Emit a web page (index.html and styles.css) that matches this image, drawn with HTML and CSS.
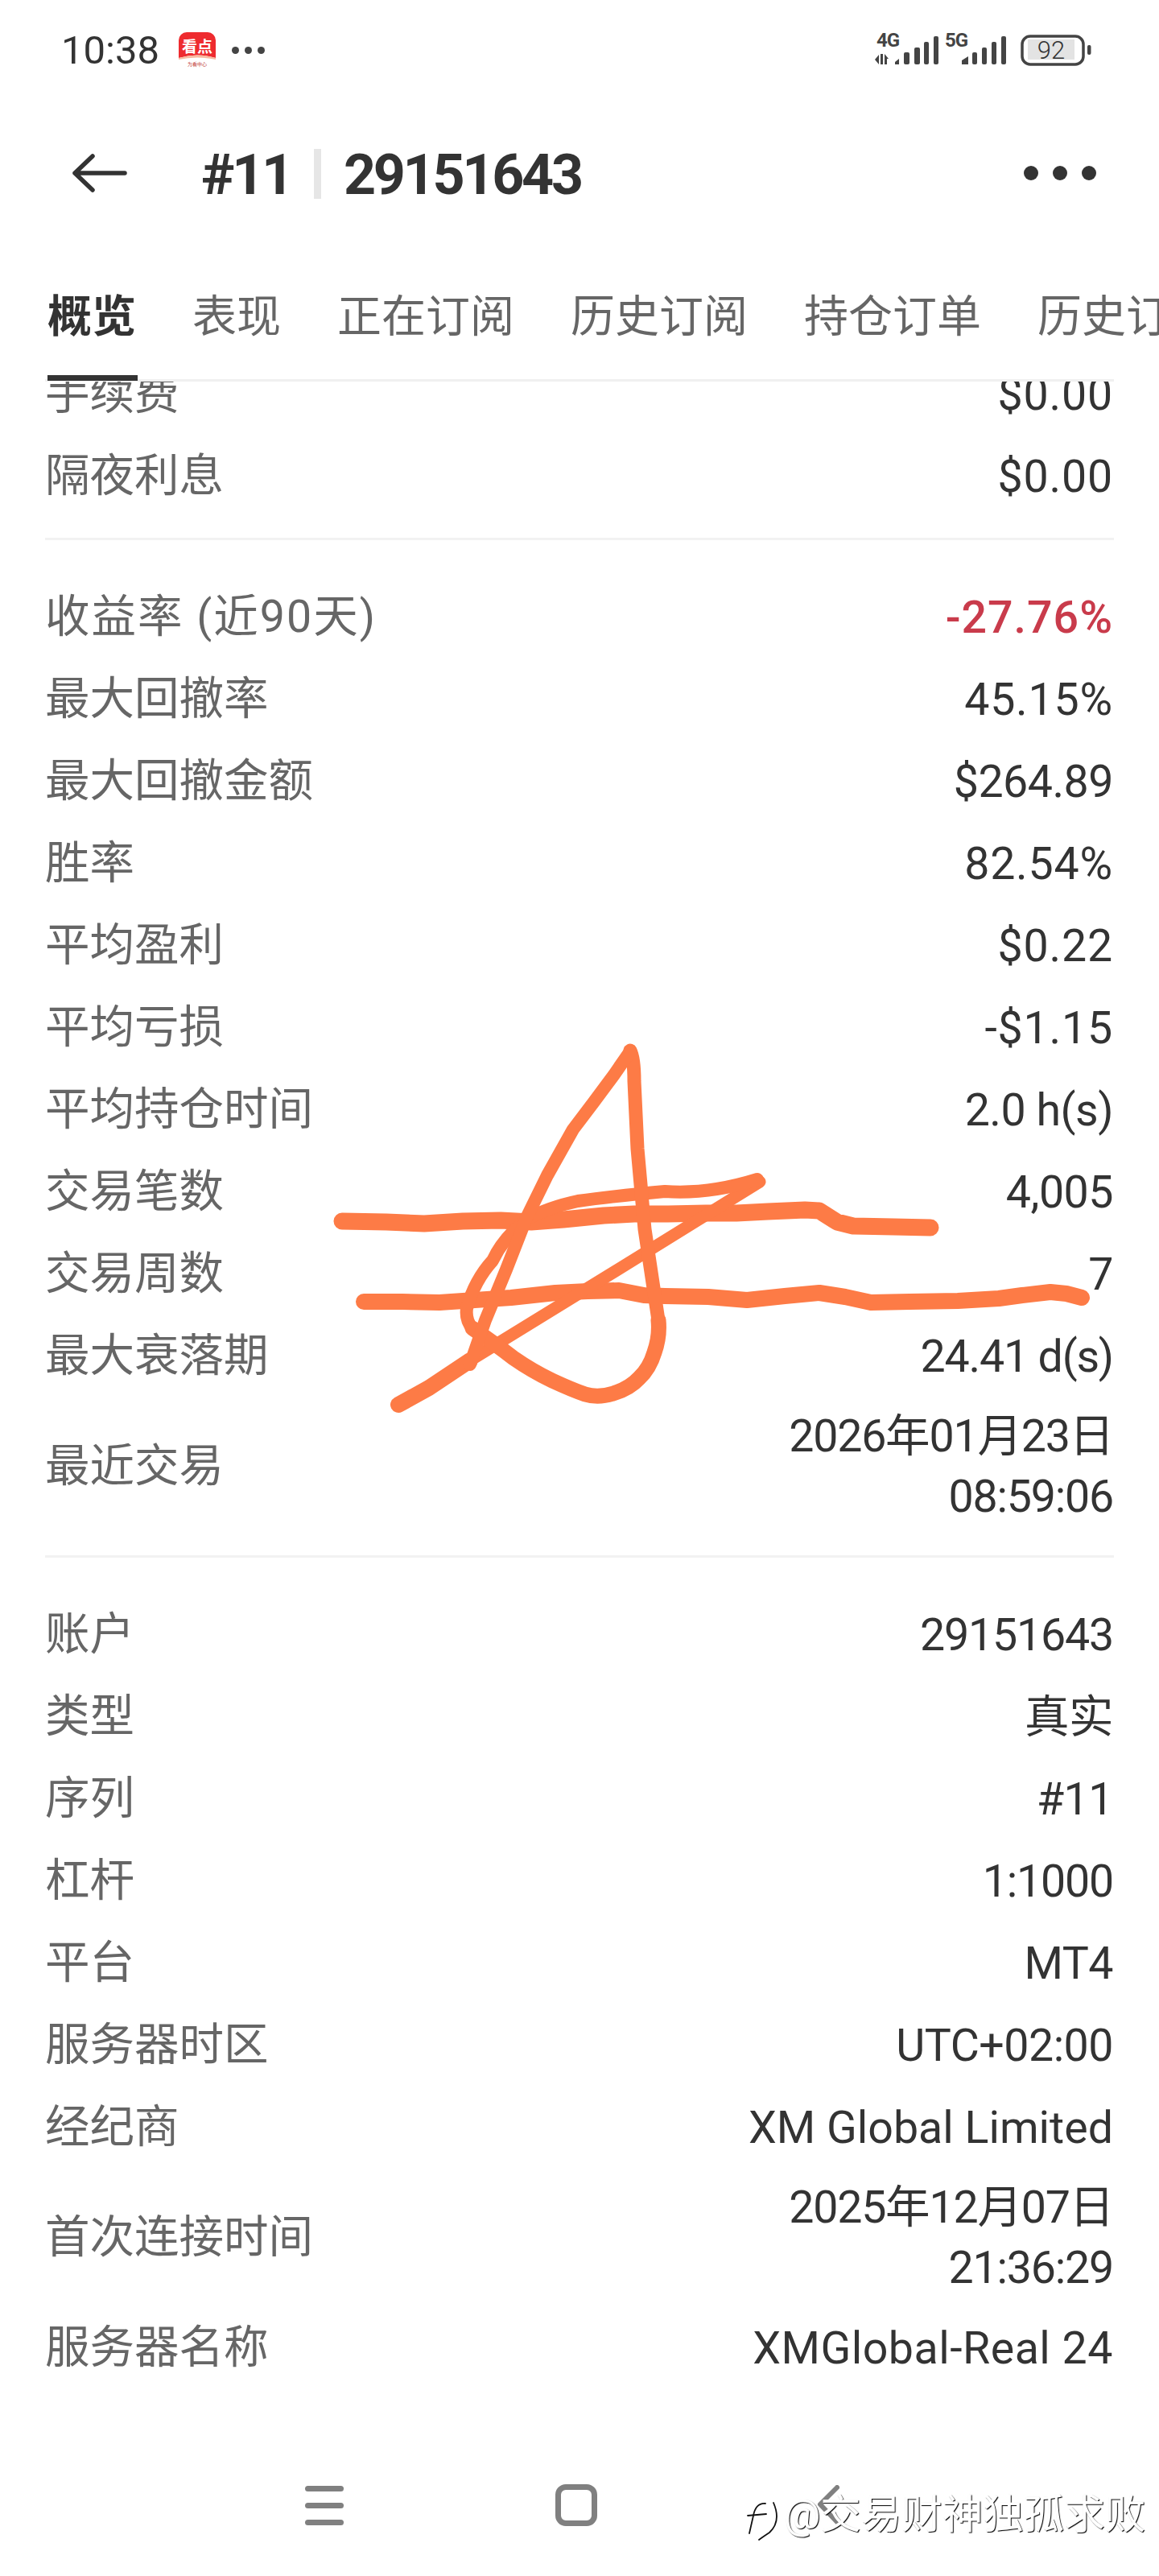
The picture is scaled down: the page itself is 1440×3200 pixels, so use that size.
FILE: index.html
```html
<!DOCTYPE html>
<html lang="zh-CN">
<head>
<meta charset="utf-8">
<title>#11 29151643</title>
<link rel="stylesheet" href="styles.css">
</head>
<body>
<div class="page">
  <div class="status">
    <div class="status-left">
      <span class="time">10:38</span>
      <svg class="app-icon" viewBox="222 36 48 48" width="48" height="48">
        <path d="M232 40h26a10 10 0 0 1 10 10v22q-23-7-46 0V50a10 10 0 0 1 10-10z" fill="#ee2b2f"/>
        <path d="M222 72q23-7 46 0v2q-23-5-46 0z" fill="#f8b9a0"/>
        <text x="245" y="65" class="app-title">看点</text>
        <text x="245" y="82" class="app-sub">为看中心</text>
      </svg>
      <span class="dots"><i></i><i></i><i></i></span>
    </div>
    <svg class="status-right" viewBox="1080 32 280 60" width="280" height="60">
      <text x="1089" y="58" class="net">4G</text>
      <path d="M1087 74l5-6v12zM1094 67h3v13h-3zM1099 67l5 6h-5zM1099 73h3v7h-3z" fill="#444"/>
      <g fill="#444">
        <path d="M1112 77l5-4v7h-5z"/>
        <rect x="1123" y="65" width="7" height="15" rx="2"/>
        <rect x="1136" y="59" width="7" height="21" rx="2"/>
        <rect x="1148" y="52" width="6" height="28" rx="2"/>
        <rect x="1160" y="45" width="6" height="35" rx="2"/>
      </g>
      <text x="1174" y="58" class="net">5G</text>
      <g fill="#444">
        <path d="M1195 75l8-5v10h-8z"/>
        <rect x="1208" y="65" width="6" height="15" rx="2"/>
        <rect x="1220" y="59" width="6" height="21" rx="2"/>
        <rect x="1232" y="52" width="6" height="28" rx="2"/>
        <rect x="1244" y="45" width="6" height="35" rx="2"/>
      </g>
      <rect x="1270" y="45" width="76" height="35" rx="10" fill="none" stroke="#444" stroke-width="3.500"/>
      <rect x="1277" y="49" width="58" height="25" fill="#e3e3e3"/>
      <text x="1306" y="73" class="batt">92</text>
      <rect x="1351" y="56" width="4.500" height="12" rx="2" fill="#444"/>
    </svg>
  </div>

  <div class="header">
    <svg class="back" viewBox="0 0 68 48" width="68" height="48" fill="none" stroke="#333" stroke-width="5.500" stroke-linecap="round" stroke-linejoin="round">
      <path d="M25 3L3 24l22 21M3 24h62"/>
    </svg>
    <div class="title">
      <span>#11</span>
      <i class="title-sep"></i>
      <span>29151643</span>
    </div>
    <span class="more"><i></i><i></i><i></i></span>
  </div>

  <div class="tabs">
    <span class="tab active">概览</span>
    <span class="tab">表现</span>
    <span class="tab">正在订阅</span>
    <span class="tab">历史订阅</span>
    <span class="tab">持仓订单</span>
    <span class="tab">历史订单</span>
  </div>

  <div class="scroller">
    <div class="list">
      <div class="row"><span class="label">手续费</span><span class="value short">$0.00</span></div>
      <div class="row"><span class="label">隔夜利息</span><span class="value short">$0.00</span></div>
      <div class="rule"></div>
      <div class="row"><span class="label wide">收益率 (近90天)</span><span class="value loss">-27.76%</span></div>
      <div class="row"><span class="label">最大回撤率</span><span class="value short">45.15%</span></div>
      <div class="row"><span class="label">最大回撤金额</span><span class="value">$264.89</span></div>
      <div class="row"><span class="label">胜率</span><span class="value short">82.54%</span></div>
      <div class="row"><span class="label">平均盈利</span><span class="value short">$0.22</span></div>
      <div class="row"><span class="label">平均亏损</span><span class="value short">-$1.15</span></div>
      <div class="row"><span class="label">平均持仓时间</span><span class="value">2.0 h(s)</span></div>
      <div class="row"><span class="label">交易笔数</span><span class="value">4,005</span></div>
      <div class="row"><span class="label">交易周数</span><span class="value">7</span></div>
      <div class="row"><span class="label">最大衰落期</span><span class="value digits">24.41 d(s)</span></div>
      <div class="row tall"><span class="label">最近交易</span><span class="value digits">2026年01月23日<br>08:59:06</span></div>
      <div class="rule second"></div>
      <div class="row"><span class="label">账户</span><span class="value digits">29151643</span></div>
      <div class="row"><span class="label">类型</span><span class="value">真实</span></div>
      <div class="row"><span class="label">序列</span><span class="value">#11</span></div>
      <div class="row"><span class="label">杠杆</span><span class="value digits">1:1000</span></div>
      <div class="row"><span class="label">平台</span><span class="value">MT4</span></div>
      <div class="row"><span class="label">服务器时区</span><span class="value">UTC+02:00</span></div>
      <div class="row"><span class="label">经纪商</span><span class="value latin">XM Global Limited</span></div>
      <div class="row tall"><span class="label">首次连接时间</span><span class="value digits">2025年12月07日<br>21:36:29</span></div>
      <div class="row"><span class="label">服务器名称</span><span class="value latin-wide">XMGlobal-Real 24</span></div>
    </div>
  </div>

  <div class="nav">
    <span class="nav-slot"><span class="nav-menu"><i></i><i></i><i></i></span></span>
    <span class="nav-slot"><span class="nav-home"></span></span>
    <span class="nav-slot">
      <svg viewBox="0 0 28 50" width="28" height="50" fill="none" stroke="#808080" stroke-width="6" stroke-linecap="round" stroke-linejoin="round"><path d="M25 3L4 24l22 23"/></svg>
    </span>
  </div>

  <svg class="scribble" viewBox="0 0 1440 3200" width="1440" height="3200" fill="none" stroke="#fd7b46" stroke-linecap="round" stroke-linejoin="round">
    <path stroke-width="21" d="M425 1517L480 1518L527 1520L575 1517L622 1516L660 1518L700 1515L750 1510L788 1508L830 1508L877 1507L915 1507L954 1505L1000 1503L1018 1504L1040 1518L1060 1523L1110 1524L1156 1525"/>
    <path stroke-width="20" d="M452 1617L500 1617L546 1618L590 1615L635 1612L690 1606L730 1604L769 1603L800 1609L826 1610L880 1611L928 1615L975 1610L1018 1606L1050 1611L1082 1618L1130 1617L1190 1616L1241 1613L1270 1609L1305 1605L1325 1607L1344 1612"/>
    <path stroke-width="20" d="M495 1745L533 1724L584 1690"/>
    <path stroke-width="15" d="M584 1690L763 1580L944 1468"/>
    <path stroke-width="16" d="M941 1465Q880 1484 826 1480Q760 1486 718 1492Q680 1500 654 1515Q625 1538 612 1566Q590 1590 580 1625Q578 1640 587 1650"/>
    <path stroke-width="19" d="M587 1650Q616 1670 638 1687Q661 1703 686 1715Q712 1727 727 1732Q743 1737 762 1731Q782 1725 794 1712Q807 1700 813 1680Q820 1660 818 1640"/>
    <path stroke-width="17" d="M818 1640L801 1527L792 1427L788 1343Q788 1315 783 1305"/>
    <path stroke-width="16" d="M783 1306L763 1335L737 1370L712 1403L680 1460L654 1513L629 1577L603 1640L584 1695"/>
  </svg>

  <div class="watermark">
    <svg class="wm-logo" viewBox="0 0 46 54" width="46" height="54" fill="none" stroke="#111" stroke-width="1.800" stroke-linecap="round">
      <path d="M26 5Q14 4 11 20L6 42"/>
      <path d="M4 20L27 18"/>
      <path d="M36 4Q46 27 31 41Q22 47 18 50"/>
    </svg>
    <span class="wm-text">@交易财神独孤求败</span>
  </div>
</div>
</body>
</html>
```
FILE: styles.css
```css
* { box-sizing: border-box; }
html, body { margin: 0; padding: 0; background: #fff; }
i { display: block; }

.page {
  position: relative;
  width: 1440px;
  height: 3200px;
  overflow: hidden;
  display: flex;
  flex-direction: column;
  background: #fff;
  font-family: Roboto, "Noto Sans CJK SC", sans-serif;
  color: #333;
}

.status {
  flex: none;
  height: 124px;
  padding: 0 80px 0 76px;
  display: flex;
  align-items: center;
  justify-content: space-between;
}
.status-left { display: flex; align-items: center; }
.time { font-size: 49px; line-height: 1; color: #333; width: 146px; }
.app-icon { display: block; margin-top: -4px; }
.app-title { font-family: "Noto Sans CJK SC", sans-serif; font-size: 19px; font-weight: 700; fill: #fff; text-anchor: middle; }
.app-sub { font-family: "Noto Sans CJK SC", sans-serif; font-size: 6px; fill: #c2413b; text-anchor: middle; }
.dots { display: flex; gap: 7px; margin-left: 18px; }
.dots i { width: 9px; height: 9px; border-radius: 50%; background: #444; }
.net { font-family: Roboto, sans-serif; font-size: 24px; font-weight: 700; fill: #444; letter-spacing: -1px; }
.batt { font-family: Roboto, sans-serif; font-size: 31px; font-weight: 300; fill: #333; text-anchor: middle; }

.header {
  flex: none;
  height: 182px;
  padding: 0 78px 0 90px;
  display: flex;
  align-items: center;
}
.back { display: block; flex: none; }
.title {
  margin: 4px 0 0 92px;
  display: flex;
  align-items: center;
  gap: 28px;
  font-size: 70px;
  font-weight: 700;
  letter-spacing: -3.300px;
  line-height: 1;
  color: #333;
}
.title-sep { width: 9px; height: 62px; background: #e6e6e6; margin-top: -2px; }
.more { margin-left: auto; display: flex; gap: 18px; }
.more i { width: 18px; height: 18px; border-radius: 50%; background: #333; }

.tabs {
  flex: none;
  position: relative;
  height: 168px;
  margin: 0 56px;
  padding: 8px 0 0 3px;
  border-bottom: 3px solid #f0f0f0;
  display: flex;
  align-items: center;
  gap: 70px;
  font-size: 55px;
  line-height: 1.2;
  color: #666;
  white-space: nowrap;
}
.tab { position: relative; flex: none; }
.tab.active { font-weight: 700; color: #333; }
.tab.active::after {
  content: "";
  position: absolute;
  left: 0;
  right: -2px;
  bottom: -47px;
  height: 7px;
  background: #333;
}

.scroller { flex: 1; min-height: 0; margin: 0 56px; overflow: hidden; }
.list { margin-top: -39px; }
.row {
  height: 102px;
  padding-top: 8px;
  display: flex;
  align-items: center;
  justify-content: space-between;
}
.row.tall { height: 172px; }
.label { font-size: 55.500px; line-height: 1; color: #666; white-space: nowrap; }
.label.wide { letter-spacing: 2px; }
.value {
  font-size: 55.500px;
  line-height: 75px;
  letter-spacing: -0.500px;
  padding-right: 1px;
  text-align: right;
  color: #333;
  white-space: nowrap;
}
.value.short { letter-spacing: 0.800px; }
.value.digits { letter-spacing: -1.200px; }
.value.latin { letter-spacing: 0; }
.value.latin-wide { letter-spacing: 0.500px; }
.value.loss { color: #c93b4b; font-weight: 500; letter-spacing: 1px; }
.rule { height: 3px; margin: 29px 0 41px; background: #f2f2f2; }
.rule.second { margin: 28px 0 41px; }

.nav {
  flex: none;
  height: 160px;
  padding: 0 8px 16px 0;
  display: grid;
  grid-template-columns: repeat(3, 313px);
  justify-content: center;
  align-items: center;
}
.nav-slot { display: flex; justify-content: center; align-items: center; }
.nav-menu { display: flex; flex-direction: column; gap: 14px; }
.nav-menu i { width: 48px; height: 7px; border-radius: 4px; background: #808080; }
.nav-home { display: block; width: 52px; height: 52px; border: 7px solid #808080; border-radius: 13px; }

.scribble { position: absolute; left: 0; top: 0; pointer-events: none; }

.watermark {
  position: absolute;
  left: 925px;
  top: 3097px;
  display: flex;
  align-items: flex-start;
  gap: 3px;
}
.wm-logo { display: block; margin-top: 8px; }
.wm-text {
  font-size: 50.500px;
  line-height: 54px;
  color: #fff;
  white-space: nowrap;
  text-shadow: 1px 1px 1px #000;
}
```
